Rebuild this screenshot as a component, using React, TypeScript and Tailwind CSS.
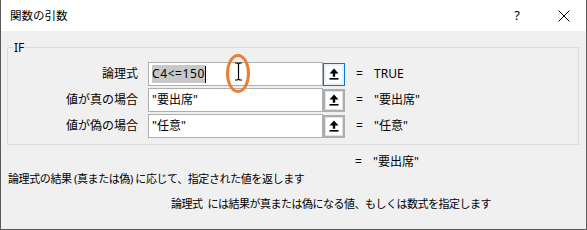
import React from 'react';

const UpArrow: React.FC = () => (
  <svg width="10" height="12" viewBox="0 0 10 12" className="block">
    <path d="M5 0.5 L9.5 5.5 L6.2 5.5 L6.2 8.8 L3.8 8.8 L3.8 5.5 L0.5 5.5 Z" fill="#000" />
    <rect x="0.5" y="10" width="9" height="1.6" fill="#000" />
  </svg>
);

interface RefButtonProps {
  focused?: boolean;
}

const RefButton: React.FC<RefButtonProps> = ({ focused }) => (
  <div
    className={
      focused
        ? 'w-[22px] h-[23px] border border-[#0078d7] bg-[#e5f1fb] p-[2px] flex'
        : 'w-[22px] h-[23px] border-2 border-[#adadad] bg-[#e1e1e1] p-px flex'
    }
  >
    <div className="flex-1 bg-white flex items-center justify-center">
      <UpArrow />
    </div>
  </div>
);

interface ArgRowProps {
  label: string;
  value: React.ReactNode;
  result: string;
  focused?: boolean;
}

const ArgRow: React.FC<ArgRowProps> = ({ label, value, result, focused }) => (
  <div className="flex items-center h-[24px]">
    <div className="w-[130px] text-right">{label}</div>
    <div className="ml-[10px] flex items-center">
      <div className="w-[175px] h-[24px] border border-[#adadad] bg-white flex items-center pl-[3px]">
        {value}
      </div>
      <RefButton focused={focused} />
    </div>
    <div className="ml-[11px] w-[18px]">=</div>
    <div>{result}</div>
  </div>
);

const App: React.FC = () => {
  return (
    <div className="w-[587px] h-[230px] bg-[#f0f0f0] border-l border-r border-b border-[#5a5a5a] text-[12px] text-black font-['Noto_Sans','Noto_Sans_CJK_JP',sans-serif] leading-none flex flex-col relative overflow-hidden">
      {/* title bar */}
      <div className="h-[31px] bg-white flex items-center pl-[9px] pr-[16px] shrink-0">
        <span className="text-[11.5px]">関数の引数</span>
        <span className="ml-auto text-[13px] mr-[38px]">?</span>
        <svg width="12" height="12" viewBox="0 0 12 12">
          <path d="M0.5 0.5 L11.5 11.5 M11.5 0.5 L0.5 11.5" stroke="#000" strokeWidth="1" />
        </svg>
      </div>

      {/* IF group */}
      <div className="mt-[16px] ml-[6px] mr-[7px] h-[98px] border border-[#dcdcdc] relative pt-[14px] flex flex-col gap-[2px]">
        <span className="absolute left-[5px] -top-[6px] px-px bg-[#f0f0f0] text-[12px]">IF</span>
        <ArgRow
          label="論理式"
          focused
          result="TRUE"
          value={
            <>
              <span className="bg-[#c8c8c8] py-[3px] tracking-[0.6px]">C4&lt;=150</span>
              <span className="w-px h-[17px] bg-black" />
            </>
          }
        />
        <ArgRow label="値が真の場合" result={'"要出席"'} value={<span>"要出席"</span>} />
        <ArgRow label="値が偽の場合" result={'"任意"'} value={<span>"任意"</span>} />
      </div>

      {/* formula result */}
      <div className="flex mt-[10px] h-[14px] items-center">
        <div className="ml-[354px] w-[18px]">=</div>
        <div>"要出席"</div>
      </div>

      <div className="mt-[2px] pl-[7px] h-[14px] flex items-center text-[11px] tracking-[-0.4px]">
        論理式の結果 (真または偽) に応じて、指定された値を返します
      </div>

      <div className="mt-[11px] pl-[170px] h-[14px] flex items-center text-[11px] tracking-[-0.5px]">
        <span>論理式</span>
        <span className="ml-[5px]">には結果が真または偽になる値、もしくは数式を指定します</span>
      </div>

      {/* annotation overlay: orange circle with I-beam cursor */}
      <div className="absolute left-[225px] top-[54px] w-[24px] h-[39px] rounded-[50%] border-[3px] border-[#ed7d31]" />
      <svg className="absolute left-[233px] top-[62px]" width="9" height="19" viewBox="0 0 9 19">
        <path d="M1 1 L3.5 1 L4.5 2 L5.5 1 L8 1 M4.5 2 L4.5 17 M1 18 L3.5 18 L4.5 17 L5.5 18 L8 18" stroke="#000" strokeWidth="1.2" fill="none" />
      </svg>
    </div>
  );
};

export default App;
